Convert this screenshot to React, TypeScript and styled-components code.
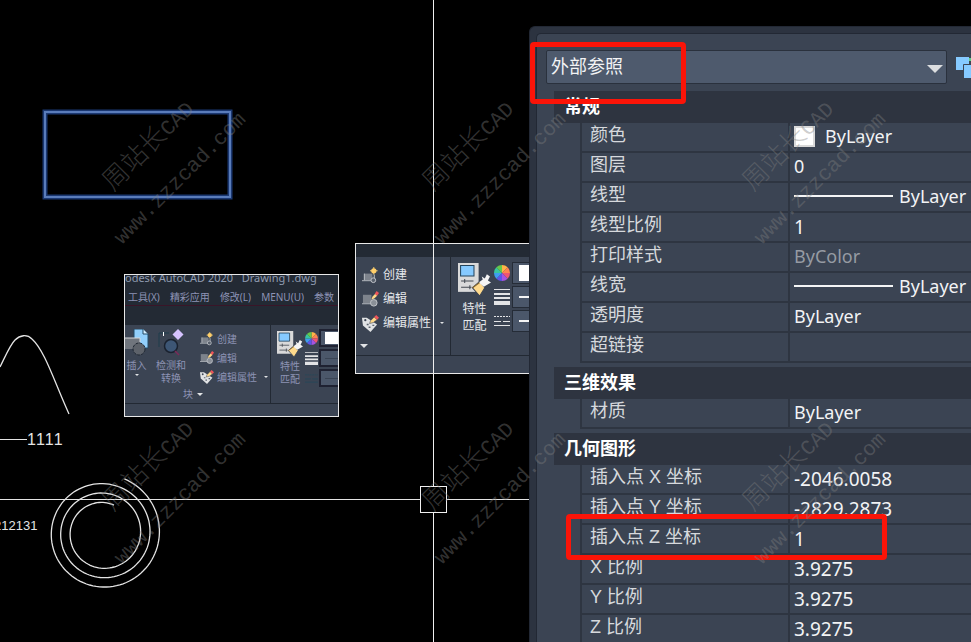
import React, { useState } from "react";
import styled, { createGlobalStyle, css } from "styled-components";

const GlobalStyle = createGlobalStyle`
  *, *::before, *::after { box-sizing: border-box; }
  body {
    margin: 0;
    background: #000;
    color: #f2f3f5;
    font-family: "Noto Sans", "Noto Sans CJK SC", sans-serif;
  }
  button, input, select { font: inherit; color: inherit; }
`;

const Workspace = styled.main`
  position: relative;
  display: grid;
  grid-template-columns: minmax(0, 1fr) 442px;
  height: 100vh;
  overflow: hidden;
`;

/* ---------- Drawing area ---------- */

const Canvas = styled.section`
  position: relative;
  overflow: hidden;
  background: #000;
`;

const Geometry = styled.svg`
  position: absolute;
  top: 0;
  left: 0;
  width: 100%;
  height: 100%;
`;

const GeometryText = styled.text<{ $size: number }>`
  font-family: "Liberation Sans", Arial, sans-serif;
  font-size: ${(p) => p.$size}px;
  font-kerning: none;
  fill: #e4e4e4;
`;

const Snapshot = styled.div<{ $small?: boolean }>`
  position: absolute;
  display: flex;
  flex-direction: column;
  overflow: hidden;
  border: 1px solid #e8e8e8;
  background: #3b4453;
  line-height: 1;
  white-space: nowrap;
  ${(p) =>
    p.$small
      ? css`
          top: 274px;
          left: 124px;
          width: 215px;
          height: 143px;
          color: #8d93b4;
          font-size: 10px;
        `
      : css`
          top: 243px;
          left: 355px;
          width: 200px;
          height: 131px;
          color: #e6e8eb;
          font-size: 12px;
        `}
`;

const TitleStrip = styled.div`
  flex: none;
  height: 10px;
  overflow: hidden;
  background: #232a34;
  color: #8f9bb0;
  font-size: 11px;
  line-height: 6px;
  white-space: pre;
`;

const MenuStrip = styled.div`
  display: flex;
  flex: none;
  gap: 10px;
  align-items: center;
  height: 21px;
  padding: 3px 0 0 3px;
  overflow: hidden;
  border-bottom: 1px solid #3a1528;
  background: #232a34;
  font-size: 10px;
`;

const TabStrip = styled.div<{ $height: number }>`
  flex: none;
  height: ${(p) => p.$height}px;
  background: #232a34;
`;

const RibbonBody = styled.div`
  display: flex;
  flex: 1;
  min-height: 0;
  border-bottom: 1px solid #222933;
`;

const RibbonFooter = styled.div<{ $height: number }>`
  flex: none;
  height: ${(p) => p.$height}px;
`;

const BlockGroup = styled.div<{ $width: number }>`
  display: flex;
  flex: none;
  flex-direction: column;
  width: ${(p) => p.$width}px;
  border-right: 1px solid #222933;
`;

const ToolArea = styled.div`
  display: flex;
`;

const BigTool = styled.button<{ $width: number }>`
  display: flex;
  flex: none;
  flex-direction: column;
  gap: 3px;
  align-items: center;
  width: ${(p) => p.$width}px;
  padding: 4px 0 0;
  border: 0;
  background: none;
  line-height: 12px;
`;

const ToolLabel = styled.span<{ $small?: boolean }>`
  display: flex;
  flex-direction: column;
  align-items: center;
  line-height: ${(p) => (p.$small ? 13 : 17)}px;
`;

const ToolList = styled.div<{ $small?: boolean }>`
  display: flex;
  flex-direction: column;
  padding: ${(p) => (p.$small ? "4px 0 0 6px" : "6px 0 0 6px")};
`;

const ToolButton = styled.button<{ $small?: boolean }>`
  display: flex;
  gap: ${(p) => (p.$small ? 3 : 4)}px;
  align-items: center;
  height: ${(p) => (p.$small ? 19 : 24)}px;
  padding: 0;
  border: 0;
  background: none;
`;

const ArrowMark = styled.span<{ $gap?: number; $size?: number }>`
  width: 0;
  margin-left: ${(p) => p.$gap ?? 0}px;
  border: ${(p) => p.$size ?? 4}px solid transparent;
  border-top-color: #e2e4e6;
  border-bottom: 0;
`;

const GroupTitle = styled.button<{ $small?: boolean }>`
  display: flex;
  gap: 4px;
  align-items: center;
  padding: 0;
  margin: ${(p) => (p.$small ? "3px 0 0 58px" : "9px 0 0 3px")};
  border: 0;
  background: none;
`;

const MatchTool = styled.button<{ $small?: boolean }>`
  display: flex;
  flex: none;
  flex-direction: column;
  gap: ${(p) => (p.$small ? 3 : 4)}px;
  align-items: center;
  width: ${(p) => (p.$small ? 34 : 43)}px;
  padding: ${(p) => (p.$small ? "6px 0 0 4px" : "6px 0 0 4px")};
  border: 0;
  background: none;
`;

const StyleRows = styled.div<{ $small?: boolean }>`
  display: grid;
  flex: 1;
  grid-template-columns: ${(p) => (p.$small ? "14px 1fr" : "18px 1fr")};
  grid-auto-rows: ${(p) => (p.$small ? 20 : 24)}px;
  align-items: center;
  padding-top: ${(p) => (p.$small ? 3 : 4)}px;
`;

const StyleBox = styled.span<{ $small?: boolean }>`
  display: flex;
  align-items: center;
  height: ${(p) => (p.$small ? 18 : 22)}px;
  padding-left: ${(p) => (p.$small ? 4 : 6)}px;
  border: ${(p) => (p.$small ? "2px solid #1f2232" : "1px solid #252c37")};
  border-right: 0;
  background: #4b576a;
`;

const WhiteSwatch = styled.span<{ $small?: boolean }>`
  flex: 1;
  height: ${(p) => (p.$small ? 12 : 16)}px;
  background: #fff;
`;

const Dash = styled.span<{ $dim?: boolean }>`
  flex: 1;
  height: ${(p) => (p.$dim ? 1 : 2)}px;
  background: ${(p) => (p.$dim ? "#3a4454" : "#f4f4f4")};
`;

/* ---------- Properties palette ---------- */

const Palette = styled.aside`
  position: relative;
  height: calc(100vh - 26px);
  margin-top: 26px;
  padding: 6px 0 0 6px;
  border-top: 1px solid #222834;
  border-left: 1px solid #222834;
  border-top-left-radius: 6px;
  background: #2c3340;
`;

const PaletteBody = styled.div`
  display: flex;
  flex-direction: column;
  height: 100%;
  padding: 16px 0 0 9px;
  overflow: hidden;
  border-top: 1px solid #222834;
  border-left: 1px solid #222834;
  border-top-left-radius: 5px;
  background: #3b4453;
`;

const SelectorRow = styled.div`
  display: flex;
  flex: none;
  gap: 9px;
  align-items: center;
`;

const TypePicker = styled.label`
  position: relative;
  flex: none;
  width: 401px;
  height: 34px;
`;

const TypeSelect = styled.select`
  width: 100%;
  height: 100%;
  padding: 0 28px 2px 4px;
  border: 1px solid #2a313d;
  border-radius: 2px;
  appearance: none;
  background: #4e5a6d;
  font-size: 18px;
`;

const PickerArrow = styled.span`
  position: absolute;
  top: 15px;
  right: 4px;
  border: 8px solid transparent;
  border-top-color: #dcdee0;
  border-bottom: 0;
  pointer-events: none;
`;

const IconButton = styled.button`
  display: flex;
  flex: none;
  padding: 0;
  border: 0;
  background: none;
`;

const Sections = styled.div`
  display: flex;
  flex-direction: column;
  gap: 4px;
  padding: 7px 0 0 8px;
`;

const SectionTitle = styled.h2`
  height: 32px;
  padding-left: 10px;
  margin: 0;
  background: #2e3440;
  color: #fff;
  font-size: 18px;
  font-weight: 700;
  line-height: 30px;
`;

const PropertyTable = styled.table`
  width: calc(100% - 26px);
  margin-left: 26px;
  border-left: 2px solid #2e3541;
  border-spacing: 0;
  table-layout: fixed;
`;

const NameCell = styled.th`
  width: 208px;
  height: 30px;
  padding: 0 0 4px 8px;
  border-right: 2px solid #2e3541;
  border-bottom: 2px solid #2e3541;
  color: #d6d9dd;
  font-family: "Liberation Sans", "Noto Sans CJK SC", sans-serif;
  font-size: 18px;
  font-weight: 400;
  line-height: 24px;
  text-align: left;
  white-space: nowrap;
`;

const ValueCell = styled.td<{ $muted?: boolean }>`
  height: 30px;
  padding: 0 0 0 4px;
  border-bottom: 2px solid #2e3541;
  color: ${(p) => (p.$muted ? "#969ba3" : "#f2f3f5")};
  font-size: 18px;
  line-height: 26px;
  white-space: nowrap;
`;

const ValueLine = styled.span`
  display: flex;
  align-items: center;
  padding-bottom: 2px;
`;

const ValueInput = styled.input`
  display: block;
  width: 100%;
  height: 28px;
  padding: 0;
  border: 0;
  background: transparent;
  font-size: 19px;
  outline: none;
`;

const ColorSwatch = styled.span`
  width: 21px;
  height: 21px;
  margin-right: 10px;
  border: 2px solid #d9d9d9;
  background: #fff;
`;

const LineSample = styled.span`
  width: 99px;
  height: 2px;
  margin-right: 6px;
  background: #f4f5f6;
`;

const Highlight = styled.div<{ $area: "type" | "elevation" }>`
  position: absolute;
  border: 5px solid #fb1408;
  border-radius: 4px;
  pointer-events: none;
  ${(p) =>
    p.$area === "type"
      ? css`
          top: 15px;
          left: 0;
          width: 156px;
          height: 62px;
        `
      : css`
          top: 487px;
          left: 36px;
          width: 321px;
          height: 46px;
        `}
`;

const WatermarkLayer = styled.svg`
  position: absolute;
  top: 0;
  left: 0;
  width: 100%;
  height: 100%;
  pointer-events: none;
`;

const WatermarkText = styled.text`
  fill: rgba(128, 128, 128, 0.4);
  font-family: "Liberation Mono", "Noto Sans CJK SC", monospace;
  font-size: 21px;
  font-weight: 400;
`;

const WatermarkHan = styled.tspan`
  font-family: "Noto Sans CJK SC", sans-serif;
  font-size: 26px;
  font-weight: 300;
`;

/* ---------- Icons ---------- */

const CreateIcon = ({ size }: { size: number }) => (
  <svg width={size} height={size} viewBox="0 0 18 18" fill="none">
    <rect x="2" y="7" width="9" height="7" fill="#7d838c" />
    <path d="M0 14.5h11M2.5 7v7" stroke="#b9bdc3" />
    <circle cx="12" cy="14" r="2.500" fill="#59616d" stroke="#c2c6cb" />
    <path d="M13 8v4" stroke="#c2c6cb" />
    <path d="M12.500 0v8M8.500 4h8" stroke="#f7cf72" />
    <circle cx="12.500" cy="4" r="2.800" fill="#ffcf6a" />
  </svg>
);

const EditIcon = ({ size }: { size: number }) => (
  <svg width={size} height={size} viewBox="0 0 18 18" fill="none">
    <rect x="1" y="4" width="9" height="9" fill="#7d838c" />
    <path d="M0 13.500h10" stroke="#b9bdc3" />
    <circle cx="12.500" cy="12.500" r="3.500" fill="#8a9098" stroke="#c2c6cb" />
    <path d="m10 9 1-3 3-3 2 2-3 3z" fill="#ffd889" />
    <path d="m13.500 3 2-3 2.500 2-2 3z" fill="#f0555a" />
  </svg>
);

const AttributeIcon = ({ size }: { size: number }) => (
  <svg width={size} height={size} viewBox="0 0 18 18" fill="none">
    <path d="M0 3h5l5 3 6 4-7 8-8-7z" fill="#e1e3e5" />
    <circle cx="3.500" cy="5.500" r="1.200" fill="#3b4453" />
    <path d="M5 10h2m0 3h2m2-2h2" stroke="#59616d" strokeWidth="1.500" />
    <path d="m8 9 1-3 4-4 3 3-4 3z" fill="#ffd889" stroke="#3b4453" strokeWidth=".6" />
    <path d="m13 2 2-2 3 3-2 2z" fill="#f0555a" />
  </svg>
);

const InsertIcon = () => (
  <svg width="24" height="27" viewBox="0 0 24 27" fill="none">
    <path d="M9 0h9l5 5v14H9z" fill="#92cffb" stroke="#234a66" />
    <path d="M18 0v5h5" fill="#d6efff" stroke="#234a66" />
    <path d="M0 9h15v11H0z" fill="#70757d" />
    <path d="M0 9h15v4" stroke="#d5d7da" />
    <circle cx="14" cy="20" r="6" fill="#5d626a" stroke="#1f2732" strokeDasharray="3 1" />
  </svg>
);

const DetectIcon = () => (
  <svg width="26" height="27" viewBox="0 0 26 27" fill="none">
    <path d="M1 18V4h10" stroke="#1f3d4d" />
    <path d="M5.500 3v4" stroke="#fff" />
    <circle cx="13" cy="17" r="6.500" fill="#3d5675" stroke="#1a222f" strokeWidth="1.500" />
    <path d="m17 22 4 4" stroke="#7d2858" strokeWidth="1.500" />
    <path d="M20 0l5.500 5.500L20 11l-5.500-5.500z" fill="#d6c3ff" />
  </svg>
);

const MatchIcon = ({ size }: { size: number }) => (
  <svg width={size} height={size} viewBox="0 0 32 32" fill="none">
    <path d="M0 0h20v28H0z" fill="#dadada" />
    <path d="M2.500 2.500h13v10h-13z" fill="#86caff" stroke="#24445c" />
    <path d="M3 17.500h12M3 23.500h10" stroke="#444a52" />
    <path d="M6.500 15.500v4M11.500 21.500v4" stroke="#444a52" />
    <path d="m21 18 5 6-5 8-7-8z" fill="#ffda8c" stroke="#3b4453" />
    <path d="m20 19 4-3-1-3 3 2 2-4 3 2-2 4 3 2-7 4z" fill="#f4f4f4" />
    <path d="M14 24l7-5" stroke="#8d6c30" />
  </svg>
);

const wheelColors = ["#ffb347", "#ff8450", "#ee5572", "#a553e0", "#5c55e8", "#3f9df0", "#39c6a0", "#65c94a"];

const WheelIcon = ({ size }: { size: number }) => (
  <svg width={size} height={size} viewBox="-8 -8 16 16">
    {wheelColors.map((color, i) => {
      const a = ((i * 45 - 90) * Math.PI) / 180;
      const b = a + Math.PI / 4;
      return (
        <path
          key={color}
          fill={color}
          d={`M0 0L${8 * Math.cos(a)} ${8 * Math.sin(a)}A8 8 0 0 1 ${8 * Math.cos(b)} ${8 * Math.sin(b)}Z`}
        />
      );
    })}
  </svg>
);

const WeightIcon = ({ size }: { size: number }) => (
  <svg width={size} height={size} viewBox="0 0 16 16" fill="#e3e4e6">
    <path d="M0 0h16v1H0zM0 4h16v2H0zM0 8h16v2H0zM0 12h16v4H0z" />
  </svg>
);

const LinetypeIcon = ({ size, color }: { size: number; color: string }) => (
  <svg width={size} height={size} viewBox="0 0 16 16" stroke={color}>
    <path d="M0 3.500h16" strokeDasharray="2 1" />
    <path d="M0 8.500h16" strokeDasharray="7 2" />
    <path d="M0 12.500h16" />
  </svg>
);

const QuickSelectIcon = () => (
  <svg width="24" height="22" viewBox="0 0 24 22" fill="none">
    <path d="M0 1h13v13H0z" fill="#86caff" />
    <path d="M13 2h4v3h-4z" fill="#5fd08a" />
    <path d="M7.500 8.500h16v14h-16z" fill="#86caff" stroke="#3b4453" />
  </svg>
);

/* ---------- Pieces ---------- */

const spiralPath = (() => {
  const points: string[] = [];
  for (let turn = -0.19; turn <= 2.815; turn += 0.01) {
    const radius = 56.4 - 9.4 * turn;
    const angle = turn * 2 * Math.PI;
    const x = 103 + radius * Math.cos(angle);
    const y = 533 + radius * Math.sin(angle);
    points.push(`${x.toFixed(1)} ${y.toFixed(1)}`);
  }
  return `M${points.join("L")}`;
})();

const StyleControls = ({ small }: { small?: boolean }) => {
  const size = small ? 13 : 16;
  return (
    <StyleRows $small={small}>
      <WheelIcon size={size} />
      <StyleBox $small={small}>
        <WhiteSwatch $small={small} />
      </StyleBox>
      <WeightIcon size={size} />
      <StyleBox $small={small}>
        <Dash $dim={small} />
      </StyleBox>
      <LinetypeIcon size={size} color={small ? "#24475a" : "#e3e4e6"} />
      <StyleBox $small={small}>
        <Dash $dim={small} />
      </StyleBox>
    </StyleRows>
  );
};

const BlockTools = ({ small }: { small?: boolean }) => {
  const size = small ? 14 : 17;
  return (
    <ToolList $small={small}>
      <ToolButton $small={small}>
        <CreateIcon size={size} />
        创建
      </ToolButton>
      <ToolButton $small={small}>
        <EditIcon size={size} />
        编辑
      </ToolButton>
      <ToolButton $small={small}>
        <AttributeIcon size={size} />
        编辑属性
        <ArrowMark $gap={small ? 4 : 5} $size={2} />
      </ToolButton>
    </ToolList>
  );
};

type Property = {
  name: string;
  value: string;
  kind?: "text" | "color" | "line" | "muted" | "input";
};

const sections: { title: string; rows: Property[] }[] = [
  {
    title: "常规",
    rows: [
      { name: "颜色", value: "ByLayer", kind: "color" },
      { name: "图层", value: "0" },
      { name: "线型", value: "ByLayer", kind: "line" },
      { name: "线型比例", value: "1", kind: "input" },
      { name: "打印样式", value: "ByColor", kind: "muted" },
      { name: "线宽", value: "ByLayer", kind: "line" },
      { name: "透明度", value: "ByLayer" },
      { name: "超链接", value: "" },
    ],
  },
  { title: "三维效果", rows: [{ name: "材质", value: "ByLayer" }] },
  {
    title: "几何图形",
    rows: [
      { name: "插入点 X 坐标", value: "-2046.0058", kind: "input" },
      { name: "插入点 Y 坐标", value: "-2829.2873", kind: "input" },
      { name: "插入点 Z 坐标", value: "1", kind: "input" },
      { name: "X 比例", value: "3.9275", kind: "input" },
      { name: "Y 比例", value: "3.9275", kind: "input" },
      { name: "Z 比例", value: "3.9275", kind: "input" },
    ],
  },
];

const PropertyRow = ({ name, value, kind }: Property) => {
  const [text, setText] = useState(value);
  return (
    <tr>
      <NameCell scope="row">{name}</NameCell>
      <ValueCell $muted={kind === "muted"}>
        {kind === "input" ? (
          <ValueInput aria-label={name} value={text} onChange={(e) => setText(e.target.value)} />
        ) : (
          <ValueLine>
            {kind === "color" && <ColorSwatch />}
            {kind === "line" && <LineSample />}
            {value}
          </ValueLine>
        )}
      </ValueCell>
    </tr>
  );
};

const watermarkOrigins = [0, 320].flatMap((y) => [0, 320, 640].map((x) => ({ x, y })));

export default function App() {
  return (
    <>
      <GlobalStyle />
      <Workspace>
        <Canvas>
          <Geometry fill="none" stroke="#e4e4e4">
            <rect x="45" y="112" width="185" height="85" stroke="#1b3872" strokeWidth="5" />
            <rect x="45" y="112" width="185" height="85" stroke="#5a7cba" strokeWidth="2" />
            <path d="M0 367C5 357 10 345 15 340C20 335 27 334 32 339C45 351 54 381 69 414" strokeWidth="1.3" />
            <path d="M0 439.500h27M0 499.500h420M447 499.500h600" />
            <path d={spiralPath} strokeWidth="1.3" />
            <GeometryText $size={16} stroke="none" x="27" y="445">
              1111
            </GeometryText>
            <GeometryText $size={13} stroke="none" x="-6" y="530">
              212131
            </GeometryText>
          </Geometry>

          <Snapshot $small>
            <TitleStrip>{"odesk AutoCAD 2020   Drawing1.dwg"}</TitleStrip>
            <MenuStrip>
              <span>工具(X)</span>
              <span>精彩应用</span>
              <span>修改(L)</span>
              <span>MENU(U)</span>
              <span>参数</span>
            </MenuStrip>
            <TabStrip $height={19} />
            <RibbonBody>
              <BlockGroup $width={146}>
                <ToolArea>
                  <BigTool $width={23}>
                    <InsertIcon />
                    插入
                    <ArrowMark $size={2} />
                  </BigTool>
                  <BigTool $width={46}>
                    <DetectIcon />
                    <ToolLabel $small>
                      <span>检测和</span>
                      <span>转换</span>
                    </ToolLabel>
                  </BigTool>
                  <BlockTools small />
                </ToolArea>
                <GroupTitle $small>
                  块
                  <ArrowMark $size={3} />
                </GroupTitle>
              </BlockGroup>
              <MatchTool $small>
                <MatchIcon size={26} />
                <ToolLabel $small>
                  <span>特性</span>
                  <span>匹配</span>
                </ToolLabel>
              </MatchTool>
              <StyleControls small />
            </RibbonBody>
            <RibbonFooter $height={12} />
          </Snapshot>

          <Snapshot>
            <TabStrip $height={13} />
            <RibbonBody>
              <BlockGroup $width={95}>
                <BlockTools />
                <GroupTitle aria-label="块">
                  <ArrowMark $gap={1} />
                </GroupTitle>
              </BlockGroup>
              <MatchTool>
                <MatchIcon size={33} />
                <ToolLabel>
                  <span>特性</span>
                  <span>匹配</span>
                </ToolLabel>
              </MatchTool>
              <StyleControls />
            </RibbonBody>
            <RibbonFooter $height={17} />
          </Snapshot>

          <Geometry fill="none" stroke="#f0f0f0" pointerEvents="none">
            <path d="M433.500 0v486M433.500 513v1000" />
            <rect x="420.500" y="486.500" width="26" height="26" />
          </Geometry>
        </Canvas>

        <Palette>
          <PaletteBody>
            <SelectorRow>
              <TypePicker>
                <TypeSelect aria-label="对象类型" defaultValue="外部参照">
                  <option>外部参照</option>
                </TypeSelect>
                <PickerArrow />
              </TypePicker>
              <IconButton aria-label="快速选择">
                <QuickSelectIcon />
              </IconButton>
            </SelectorRow>
            <Sections>
              {sections.map((section) => (
                <section key={section.title}>
                  <SectionTitle>{section.title}</SectionTitle>
                  <PropertyTable>
                    <tbody>
                      {section.rows.map((row) => (
                        <PropertyRow key={row.name} {...row} />
                      ))}
                    </tbody>
                  </PropertyTable>
                </section>
              ))}
            </Sections>
          </PaletteBody>
          <Highlight $area="type" />
          <Highlight $area="elevation" />
        </Palette>

        <WatermarkLayer aria-hidden="true">
          {watermarkOrigins.map(({ x, y }) => (
            <g key={`${x}-${y}`}>
              <WatermarkText transform={`translate(${x + 113} ${y + 192}) rotate(-45)`}>
                <WatermarkHan>周站长</WatermarkHan>
                CAD
              </WatermarkText>
              <WatermarkText transform={`translate(${x + 122} ${y + 245}) rotate(-45)`}>
                www.zzzcad.com
              </WatermarkText>
            </g>
          ))}
        </WatermarkLayer>
      </Workspace>
    </>
  );
}
